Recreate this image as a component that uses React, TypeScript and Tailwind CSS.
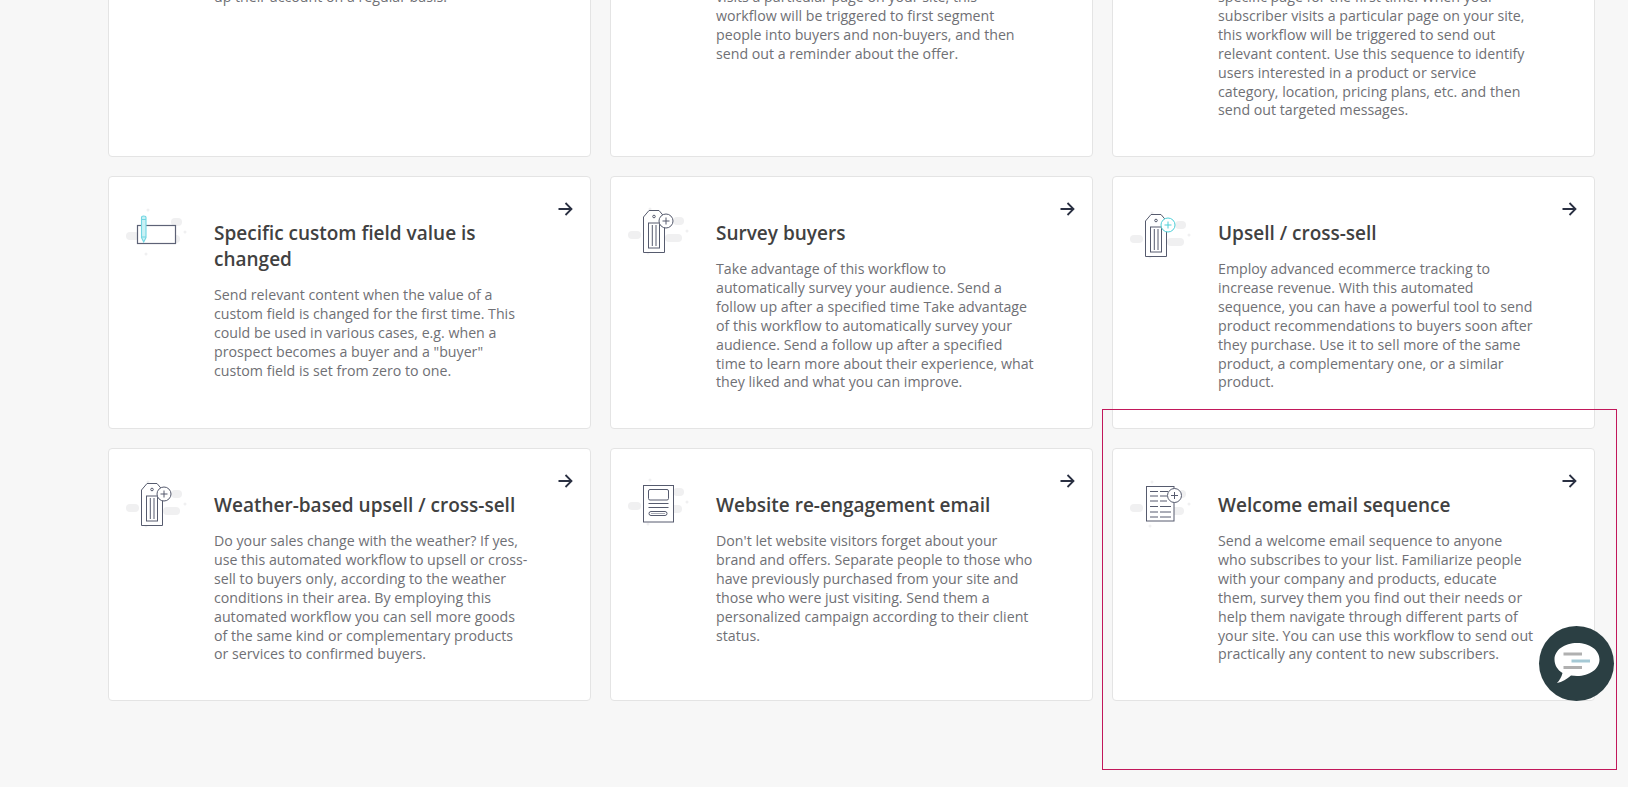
import React from "react";

const Blobs = ({ y = 0 }: { y?: number }) => (
  <g fill="#f0f0f1" transform={`translate(0 ${y})`}>
    <rect x="63" y="22" width="11" height="8" rx="4" />
    <rect x="18" y="36" width="13" height="8" rx="4" />
    <rect x="55" y="39" width="17" height="8" rx="4" />
    <circle cx="77" cy="36" r="1.5" />
    <circle cx="40" cy="14" r="1.5" />
    <circle cx="38" cy="58" r="1.5" />
  </g>
);

const Plus = ({ cx, cy, color = "#565b6e" }: { cx: number; cy: number; color?: string }) => (
  <g>
    <circle cx={cx} cy={cy} r="7" fill="#fff" stroke={color} strokeWidth="1" />
    <path d={`M${cx - 3.5} ${cy}H${cx + 3.5}M${cx} ${cy - 3.5}V${cy + 3.5}`} stroke={color} strokeWidth="1" fill="none" />
  </g>
);

const Tag = ({ y, teal }: { y: number; teal?: boolean }) => (
  <svg viewBox="0 0 106 70" className="h-[70px] w-[106px] shrink-0">
    <Blobs y={y - 1} />
    <g transform={`translate(0 ${y})`} fill="none" stroke="#565b6e" strokeWidth="1">
      <path d="M33.5 56.5V21L39 14.5H49L54.5 21V56.5Z" fill="#fff" />
      <rect x="38.5" y="27" width="11" height="25" />
      <path d="M42.3 29V50M46 29V50" />
      <circle cx="44" cy="20.5" r="1.3" />
    </g>
    <Plus cx={56} cy={25 + y} color={teal ? "#4fd0d8" : "#565b6e"} />
  </svg>
);

const FieldIcon = () => (
  <svg viewBox="0 0 106 70" className="h-[70px] w-[106px] shrink-0">
    <Blobs y={0} />
    <rect x="29.5" y="29.5" width="38" height="18" fill="#fff" stroke="#5d6276" strokeWidth="1.2" />
    <path d="M33.5 21.5Q33.5 20 35.7 20Q38 20 38 21.5V41.5L35.7 46L33.5 41.5Z" fill="#c9f1f5" stroke="#72d6e2" strokeWidth="1.1" />
    <path d="M33.5 23.5H38M33.5 41H38" stroke="#72d6e2" strokeWidth="1.1" fill="none" />
  </svg>
);

const PageIcon = () => (
  <svg viewBox="0 0 106 70" className="h-[70px] w-[106px] shrink-0">
    <Blobs y={-2} />
    <g fill="none" stroke="#565b6e" strokeWidth="1">
      <rect x="33.5" y="17.5" width="30" height="36.5" fill="#fff" />
      <rect x="38.5" y="21.5" width="20" height="10.5" rx="1.5" />
      <path d="M38.5 35.5H58.5M38.5 39.5H58.5" />
      <rect x="39" y="43.5" width="18" height="4" rx="2" />
      <path d="M41 45.5H55" stroke="#a9acb6" />
    </g>
  </svg>
);

const ListIcon = () => (
  <svg viewBox="0 0 106 70" className="h-[70px] w-[106px] shrink-0">
    <Blobs y={0} />
    <g fill="none" stroke="#565b6e" strokeWidth="1">
      <rect x="34.5" y="18.5" width="27.5" height="34.5" fill="#fff" />
      <path d="M38 23.5H46M48 23.5H56M38 28H46M48 28H55M38 33H46M48 33H55M38 38.5H46M48 38.5H59M38 44H46M48 44H59M38 49H46M48 49H59" />
    </g>
    <Plus cx={62.5} cy={27.5} />
  </svg>
);

const Arrow = () => (
  <svg viewBox="0 0 16 16" className="absolute right-[17px] top-[24px] h-[16px] w-[16px]" fill="none" stroke="#2a3042" strokeWidth="1.8">
    <path d="M1.5 8H14.5M8.5 2L14.5 8L8.5 14" />
  </svg>
);

type CardT = { icon?: React.ReactNode; title: string[]; lines: string[] };

const cards: CardT[] = [
  {
    title: ["Inactive subscribers"],
    lines: ["Keep your list clean and engaged by reaching", "out to contacts who have stopped opening", "up their account on a regular basis."],
  },
  {
    title: ["Page visit follow-up"],
    lines: ["visits a particular page on your site, this", "workflow will be triggered to first segment", "people into buyers and non-buyers, and then", "send out a reminder about the offer."],
  },
  {
    title: ["Page visited"],
    lines: ["specific page for the first time. When your", "subscriber visits a particular page on your site,", "this workflow will be triggered to send out", "relevant content. Use this sequence to identify", "users interested in a product or service", "category, location, pricing plans, etc. and then", "send out targeted messages."],
  },
  {
    icon: <FieldIcon />,
    title: ["Specific custom field value is", "changed"],
    lines: ["Send relevant content when the value of a", "custom field is changed for the first time. This", "could be used in various cases, e.g. when a", "prospect becomes a buyer and a \"buyer\"", "custom field is set from zero to one."],
  },
  {
    icon: <Tag y={0} />,
    title: ["Survey buyers"],
    lines: ["Take advantage of this workflow to", "automatically survey your audience. Send a", "follow up after a specified time Take advantage", "of this workflow to automatically survey your", "audience. Send a follow up after a specified", "time to learn more about their experience, what", "they liked and what you can improve."],
  },
  {
    icon: <Tag y={4} teal />,
    title: ["Upsell / cross-sell"],
    lines: ["Employ advanced ecommerce tracking to", "increase revenue. With this automated", "sequence, you can have a powerful tool to send", "product recommendations to buyers soon after", "they purchase. Use it to sell more of the same", "product, a complementary one, or a similar", "product."],
  },
  {
    icon: <Tag y={1} />,
    title: ["Weather-based upsell / cross-sell"],
    lines: ["Do your sales change with the weather? If yes,", "use this automated workflow to upsell or cross-", "sell to buyers only, according to the weather", "conditions in their area. By employing this", "automated workflow you can sell more goods", "of the same kind or complementary products", "or services to confirmed buyers."],
  },
  {
    icon: <PageIcon />,
    title: ["Website re-engagement email"],
    lines: ["Don't let website visitors forget about your", "brand and offers. Separate people to those who", "have previously purchased from your site and", "those who were just visiting. Send them a", "personalized campaign according to their client", "status."],
  },
  {
    icon: <ListIcon />,
    title: ["Welcome email sequence"],
    lines: ["Send a welcome email sequence to anyone", "who subscribes to your list. Familiarize people", "with your company and products, educate", "them, survey them you find out their needs or", "help them navigate through different parts of", "your site. You can use this workflow to send out", "practically any content to new subscribers."],
  },
];

const Card = ({ c, i }: { c: CardT; i: number }) => {
  // The cards of the top row are scrolled away: each text block starts where its visible lines land.
  const pt = i === 0 ? "pt-[5px]" : "pt-[43px]";
  return (
    <div className="relative flex h-[253px] rounded-[4px] border border-[#e4e4e4] bg-white">
      <div className="-ml-px w-[106px] shrink-0 pt-[19px]">{c.icon}</div>
      <div className={`${pt} whitespace-nowrap`}>
        <h3 className="text-[19px] font-semibold leading-[26px] text-[#414141]">
          {c.title.map((t) => (
            <div key={t}>{t}</div>
          ))}
        </h3>
        <p className="mt-[14px] text-[14.2px] leading-[18.9px] text-[#6f7075]">
          {c.lines.map((t) => (
            <span key={t} className="block">
              {t}
            </span>
          ))}
        </p>
      </div>
      {i > 2 && <Arrow />}
    </div>
  );
};

export default function App() {
  return (
    <div className="relative h-[787px] w-[1628px] overflow-hidden bg-[#f7f7f7] font-['Open_Sans','Noto_Sans',sans-serif]">
      <div className="ml-[108px] mt-[-96px] grid w-[1487px] grid-cols-3 gap-[19px]">
        {cards.map((c, i) => (
          <Card key={c.title[0]} c={c} i={i} />
        ))}
      </div>
      <div className="absolute left-[1102px] top-[409px] h-[361px] w-[515px] border border-[#c2185b]" />
      <div className="absolute left-[1539px] top-[626px] flex h-[75px] w-[75px] items-center justify-center rounded-full bg-[#2b3f43]">
        <svg viewBox="0 0 75 75" className="h-[75px] w-[75px]">
          <path d="M38 17C50.5 17 60.5 24 60.5 33.5C60.5 43 50.5 50 38 50C36 50 34 49.8 32 49.5C28 53 23 56 18 57C20.5 54.5 22.5 51 23.5 47C18.5 44 15.5 39 15.5 33.5C15.5 24 25.5 17 38 17Z" fill="#fff" />
          <rect x="24.5" y="26.5" width="18.5" height="3" fill="#b0b0b0" />
          <rect x="32.5" y="33.5" width="18.5" height="3" fill="#a5c9d5" />
          <rect x="24.5" y="40" width="18.5" height="3" fill="#b0b0b0" />
        </svg>
      </div>
    </div>
  );
}
